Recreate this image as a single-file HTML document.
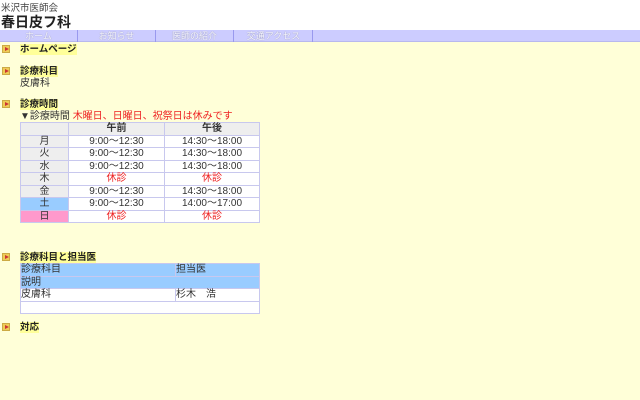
<!DOCTYPE html>
<html><head><meta charset="utf-8"><style>
*{margin:0;padding:0;box-sizing:border-box}
body{width:640px;height:400px;background:#ffffd8;font-family:"Liberation Sans","Noto Sans CJK JP",sans-serif;font-size:10px;color:#333;position:relative;overflow:hidden}
.top{background:#fff;height:30px;position:relative}
.org{position:absolute;left:1px;top:0;font-size:9.5px;color:#444}
.name{position:absolute;left:1px;top:12px;font-size:14px;font-weight:bold;color:#222}
.nav{position:absolute;left:0;top:30px;width:640px;height:12px;background:#ccccff;border-bottom:1px solid #b8b8ee}
.nav span{position:absolute;top:0;height:12px;width:78px;text-align:center;line-height:12px;font-size:9px;color:#f4f4ff;text-shadow:0 0 1px #889;border-right:1px solid #9999ee}
.h{position:absolute;left:20px;font-size:9.5px;font-weight:bold;color:#222;background:#ffff99;line-height:11px}
.ic{position:absolute;left:2px;width:8px;height:8px;background:#eecc55;border:1px solid #ccaa44}
.ic:after{content:"";position:absolute;left:2px;top:1px;border-left:4px solid #c33;border-top:2.5px solid transparent;border-bottom:2.5px solid transparent}
.t{position:absolute;font-size:10px;line-height:11px}
table{position:absolute;border-collapse:collapse;font-size:10px}
td{border:1px solid #c8c8ee;height:12.5px;padding:0;line-height:11px}
.s td{text-align:center;background:#fff}
.s td.d{background:#eee}
.s tr:first-child td{background:#eee;font-weight:bold}
.r{color:#e22}
</style></head><body>
<div class="top"><div class="org">米沢市医師会</div><div class="name">春日皮フ科</div></div>
<div class="nav"><span style="left:0">ホーム</span><span style="left:78px">お知らせ</span><span style="left:156px">医師の紹介</span><span style="left:235px">交通アクセス</span></div>
<div class="ic" style="top:45px"></div><div class="h" style="top:44px">ホームページ</div>
<div class="ic" style="top:67px"></div><div class="h" style="top:66px">診療科目</div>
<div class="t" style="left:20px;top:78px">皮膚科</div>
<div class="ic" style="top:100px"></div><div class="h" style="top:99px">診療時間</div>
<div class="t" style="left:20px;top:111px">▼診療時間 <span class="r">木曜日、日曜日、祝祭日は休みです</span></div>
<table class="s" style="left:20px;top:122px;width:240px">
<tr><td style="width:48px"></td><td style="width:96px">午前</td><td>午後</td></tr>
<tr><td class="d">月</td><td>9:00～12:30</td><td>14:30～18:00</td></tr>
<tr><td class="d">火</td><td>9:00～12:30</td><td>14:30～18:00</td></tr>
<tr><td class="d">水</td><td>9:00～12:30</td><td>14:30～18:00</td></tr>
<tr><td class="d">木</td><td class="r">休診</td><td class="r">休診</td></tr>
<tr><td class="d">金</td><td>9:00～12:30</td><td>14:30～18:00</td></tr>
<tr><td style="background:#99ccff">土</td><td>9:00～12:30</td><td>14:00～17:00</td></tr>
<tr><td style="background:#ff99cc">日</td><td class="r">休診</td><td class="r">休診</td></tr>
</table>
<div class="ic" style="top:253px"></div><div class="h" style="top:252px">診療科目と担当医</div>
<table style="left:20px;top:263px;width:240px">
<tr style="background:#99ccff"><td style="width:155px">診療科目</td><td>担当医</td></tr>
<tr style="background:#99ccff"><td colspan="2">説明</td></tr>
<tr style="background:#fff"><td>皮膚科</td><td>杉木　浩</td></tr>
<tr style="background:#fff"><td colspan="2"></td></tr>
</table>
<div class="ic" style="top:323px"></div><div class="h" style="top:322px">対応</div>
</body></html>
